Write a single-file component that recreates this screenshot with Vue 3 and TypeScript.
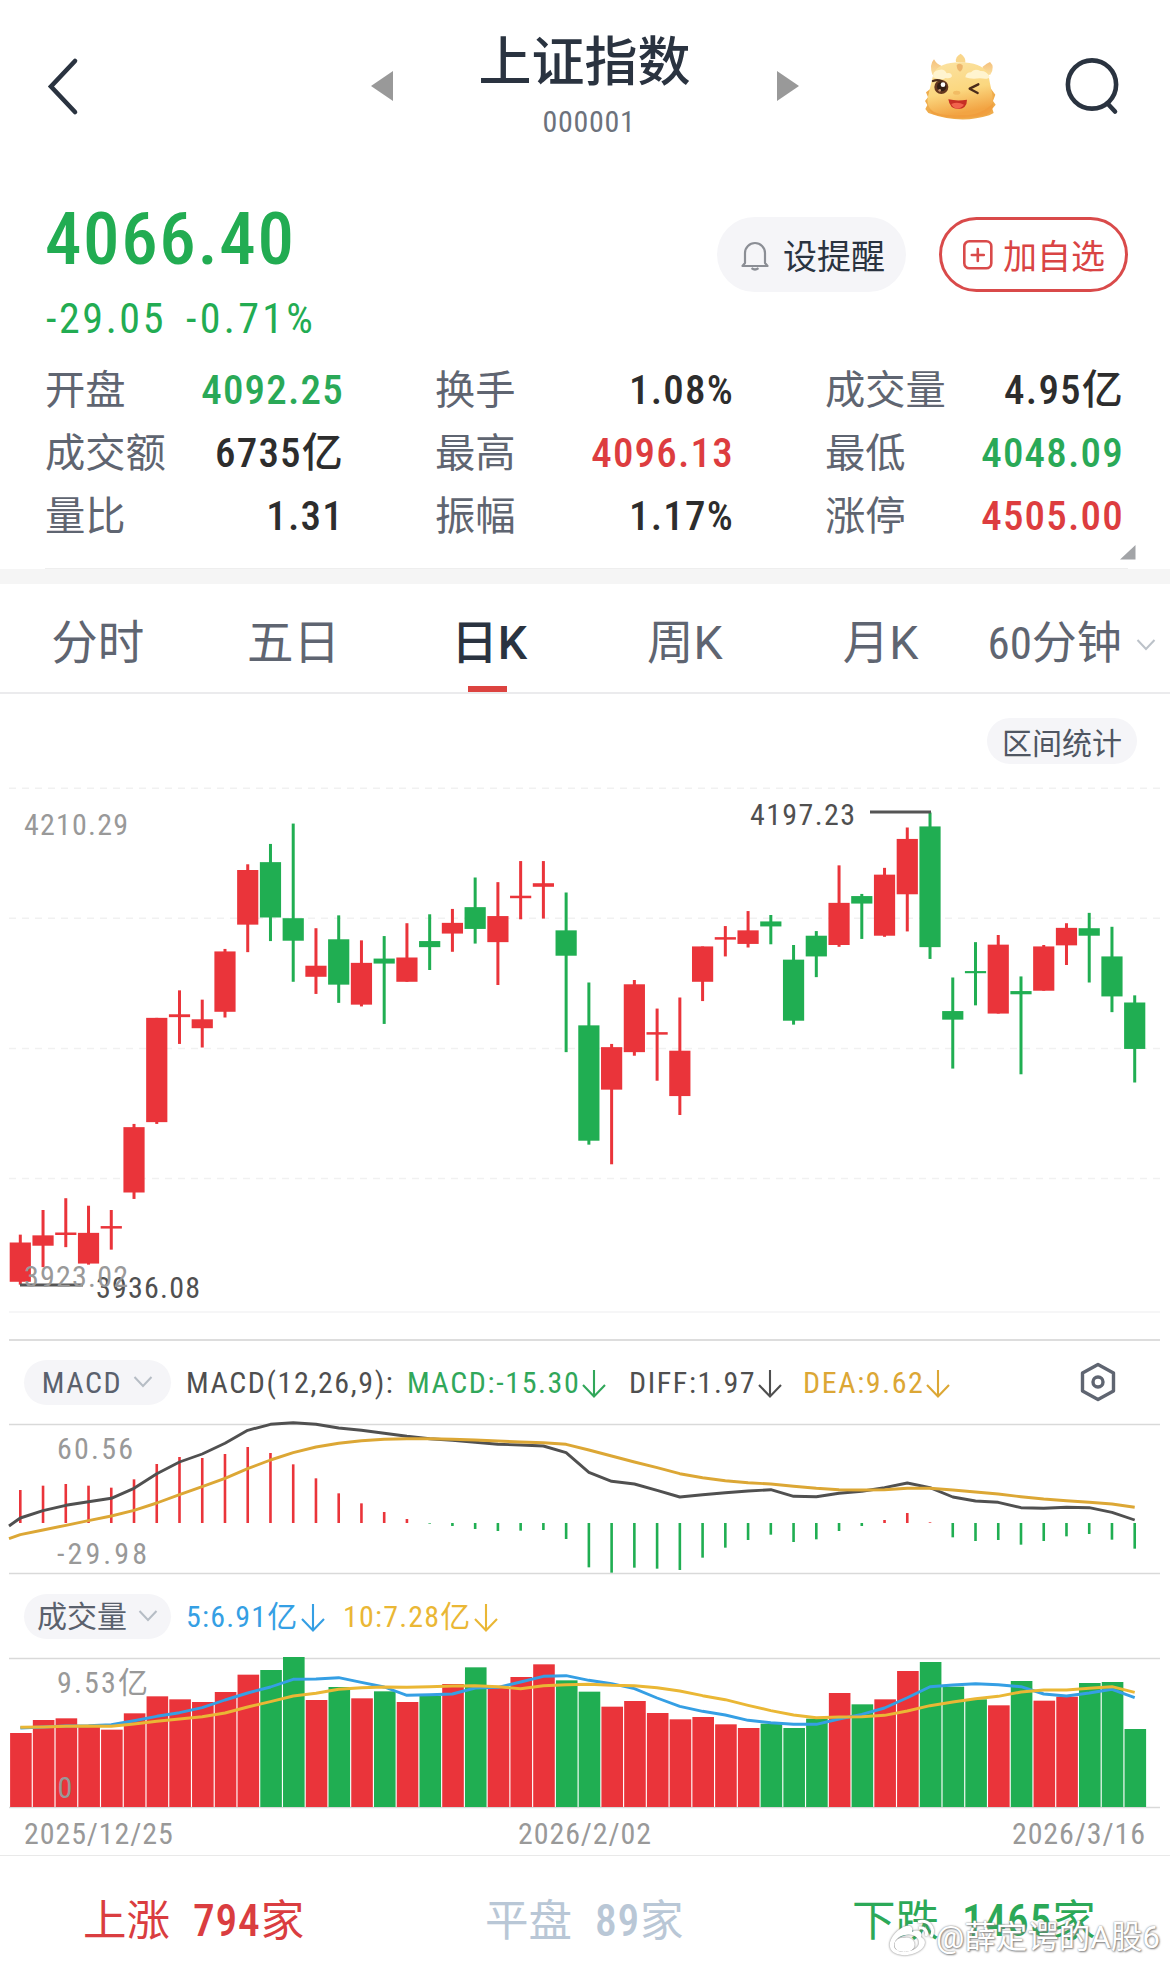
<script setup lang="ts">
type Tone = 'up' | 'down'
interface Stat { label: string; value: string; tone?: Tone }
interface Caption { x: number; y: number; w: number; text: string; cls: string }

const stats: Stat[] = [
  { label: '开盘', value: '4092.25', tone: 'down' },
  { label: '换手', value: '1.08%' },
  { label: '成交量', value: '4.95亿' },
  { label: '成交额', value: '6735亿' },
  { label: '最高', value: '4096.13', tone: 'up' },
  { label: '最低', value: '4048.09', tone: 'down' },
  { label: '量比', value: '1.31' },
  { label: '振幅', value: '1.17%' },
  { label: '涨停', value: '4505.00', tone: 'up' },
]

const tabs = ['分时', '五日', '日K', '周K', '月K']

const STEP = 22.743
const cx = (i: number): number => 20.3 + STEP * i

// Daily direction, R = rising, G = falling
const days = 'RRRRRRRRRRRGGRGRGRGRGRRRGGRRRRRRRGGGRGRRGGGRGRRGGG'
const tone = (i: number): Tone => (days[i] === 'R' ? 'up' : 'down')

// high, body top, body bottom, low, measured down from the plot top
const UNIT = 2.8
const ohlc: number[][] = [
  [1301, 1323, 1433, 1441], [1232, 1303, 1332, 1392], [1199, 1295, 1302, 1336], [1220, 1296, 1382, 1385],
  [1232, 1277, 1284, 1343], [991, 1000, 1183, 1201], [694, 694, 986, 991], [617, 684, 692, 767],
  [643, 698, 723, 777], [501, 508, 677, 693], [264, 280, 433, 510], [207, 258, 413, 479],
  [150, 415, 478, 593], [443, 548, 579, 627], [407, 474, 601, 652], [477, 540, 657, 662],
  [465, 528, 542, 711], [429, 525, 593, 593], [404, 479, 496, 560], [389, 428, 458, 509],
  [301, 384, 445, 486], [314, 409, 482, 602], [255, 352, 359, 418], [255, 317, 327, 416],
  [343, 449, 520, 790], [595, 715, 1038, 1049], [767, 776, 895, 1104], [588, 600, 790, 800],
  [668, 734, 741, 870], [637, 786, 913, 966], [494, 494, 593, 647], [437, 468, 475, 522],
  [395, 449, 487, 497], [406, 424, 438, 488], [490, 531, 702, 713], [451, 464, 522, 580],
  [267, 372, 490, 495], [347, 353, 374, 473], [274, 293, 464, 467], [161, 193, 348, 452],
  [119, 158, 496, 529], [581, 675, 699, 836], [482, 563, 569, 659], [462, 489, 682, 682],
  [578, 619, 628, 852], [490, 494, 618, 618], [429, 442, 491, 546], [400, 443, 464, 595],
  [439, 522, 634, 678], [631, 651, 781, 875],
]
const candles = ohlc.map(([h, t, b, l], i) => ({ x: cx(i), h: h / UNIT, t: t / UNIT, b: b / UNIT, l: l / UNIT, tone: tone(i) }))

const macdBars = [
  510, 497, 492, 497, 503, 478, 432, 411, 414, 402, 381, 399, 433, 475, 520, 550, 576, 597, 611, 618, 627, 633, 632, 630,
  657, 742, 758, 743, 746, 750, 713, 683, 660, 644, 666, 658, 633, 618, 600, 579, 607, 652, 663, 660, 674, 663, 649, 642,
  659, 686,
]
const diff = [
  594, 572, 556, 545, 535, 505, 461, 426, 402, 370, 331, 313, 308, 313, 324, 331, 340, 349, 356, 361, 367, 373, 375, 378,
  398, 457, 484, 492, 511, 531, 524, 518, 513, 509, 529, 530, 520, 514, 503, 489, 503, 531, 543, 547, 563, 565, 562, 563,
  577, 600,
]
const dea = [
  644, 630, 616, 602, 588, 571, 549, 524, 500, 475, 446, 420, 398, 381, 370, 362, 358, 356, 356, 358, 360, 363, 366, 368,
  373, 390, 408, 426, 443, 461, 473, 482, 488, 492, 499, 505, 509, 510, 509, 505, 505, 510, 516, 522, 530, 537, 542, 547,
  552, 562,
]
const volume = [
  459, 420, 415, 440, 449, 400, 349, 358, 366, 336, 284, 270, 231, 360, 321, 355, 334, 366, 348, 312, 262, 321, 291, 253,
  301, 335, 380, 363, 399, 418, 411, 433, 444, 431, 444, 416, 339, 373, 358, 273, 246, 320, 358, 376, 303, 362, 350, 309,
  306, 447,
]
const ma5 = [
  444, 441, 438, 437, 434, 422, 409, 398, 383, 360, 339, 321, 298, 297, 293, 307, 321, 346, 344, 342, 324, 322, 306, 289,
  287, 301, 311, 326, 354, 379, 394, 405, 421, 428, 433, 433, 417, 403, 384, 353, 320, 315, 311, 314, 320, 342, 348, 339,
  328, 353,
]
const ma10 = [
  442, 441, 439, 438, 439, 432, 424, 417, 410, 399, 381, 365, 348, 340, 328, 323, 321, 322, 320, 318, 317, 320, 326, 317,
  314, 313, 316, 317, 323, 333, 347, 359, 376, 392, 405, 413, 411, 410, 406, 393, 377, 366, 356, 349, 336, 330, 330, 325,
  320, 337,
]
const MACD_TOP = 312
const VOL_TOP = 234
const points = (v: number[], top: number): string => v.map((y, i) => `${cx(i).toFixed(1)},${((y - top) / 3).toFixed(1)}`).join(' ')

const priceText: Caption[] = [
  { x: 24, y: 65, w: 104, text: '4210.29', cls: 'faint' },
  { x: 750, y: 55, w: 105, text: '4197.23', cls: 'ink' },
  { x: 96, y: 528, w: 104, text: '3936.08', cls: 'ink' },
  { x: 24, y: 517, w: 104, text: '3923.02', cls: 'faint' },
]
</script>

<template>
  <main class="page">
    <header class="top">
      <svg class="back" width="36" height="60" viewBox="0 0 36 60"><path d="M29 5 5 30.500 29 56" /></svg>
      <svg class="prev" width="22" height="30" viewBox="0 0 22 30"><path d="M0 15 22 0V30Z" /></svg>
      <div class="heading">
        <h1>上证指数</h1>
        <p>000001</p>
      </div>
      <svg class="next" width="22" height="30" viewBox="0 0 22 30"><path d="M22 15 0 0V30Z" /></svg>
      <svg class="mascot" width="76" height="70" viewBox="66 57 228 210">
        <defs>
          <linearGradient id="skin" x1="0" y1="0" x2="0.25" y2="1">
            <stop offset="0" stop-color="#fbe3a4" /><stop offset="0.6" stop-color="#fbd77f" /><stop offset="1" stop-color="#f2a443" />
          </linearGradient>
          <linearGradient id="horn" x1="0" y1="0" x2="0" y2="1">
            <stop offset="0" stop-color="#f4c07c" /><stop offset="1" stop-color="#fbe0a0" />
          </linearGradient>
        </defs>
        <path d="M92 170 78 181 84 196 75 207 82 219 76 231 85 243Q180 278 268 250L281 243 277 230 287 218 279 207 286 188 274 172Z" fill="#efac4c" />
        <path d="M168 90Q165 74 182 65Q198 76 196 92Z" fill="#f9d68b" />
        <path d="M97 128Q87 98 102 82Q111 98 124 101L122 130Z" fill="url(#horn)" />
        <path d="M271 128Q286 104 270 90Q261 94 248 104L246 130Z" fill="url(#horn)" />
        <path d="M101 123Q118 91 180 91Q242 91 265 124Q268 148 276 182Q287 236 233 250Q174 260 116 246Q78 232 83 198Q91 163 101 123Z" fill="url(#skin)" />
        <path d="M86 231Q118 254 179 250Q244 252 280 212Q281 237 259 249Q176 270 98 246Z" fill="#f09a3a" opacity=".65" />
        <path d="M170 99Q180 91 188 100Q190 113 180 119Q170 114 170 99Z" fill="#edb56c" />
        <path d="M99 136Q97 117 116 114Q133 108 140 124Q154 120 156 133Q152 141 137 138Q124 146 99 136Z" fill="#fff4cf" />
        <path d="M196 136Q198 121 213 121Q222 108 242 117Q260 116 269 134Q268 143 240 139Q210 142 196 136Z" fill="#fff4cf" />
        <circle cx="124" cy="165" r="21" fill="#65371f" /><circle cx="125" cy="164" r="14" fill="#321d13" />
        <circle cx="129" cy="158" r="7" fill="#fff" /><circle cx="119" cy="175" r="4" fill="#c89470" />
        <path d="M99 147Q111 142 125 147" class="lash" />
        <path d="M235 157 209 170 233 183" class="lash" />
        <ellipse cx="170" cy="182" rx="11" ry="6" fill="#f2bc64" />
        <path d="M145 202Q172 208 201 203Q201 230 174 231Q149 231 145 202Z" fill="#c72f24" />
        <path d="M154 216Q173 208 192 218Q184 229 171 230Q158 227 154 216Z" fill="#f1634d" />
      </svg>
      <svg class="search" width="56" height="58" viewBox="0 0 56 58"><circle cx="28" cy="27.500" r="24.1" /><path d="M43.500 46.500 51 54.500" /></svg>
    </header>

    <section class="quote">
      <div class="price">
        <strong>4066.40</strong>
        <p><span>-29.05</span><span class="pct">-0.71%</span></p>
      </div>
      <div class="actions">
        <button class="remind">
          <svg width="30" height="32" viewBox="0 0 30 32"><path d="M5 24V14a10 10 0 0 1 20 0v10l2.500 3h-25Z M11.500 29.200q3.500 2.600 7 0" /></svg>
          <span>设提醒</span>
        </button>
        <button class="add">
          <svg width="32" height="32" viewBox="0 0 32 32"><rect x="2.300" y="2.300" width="27" height="27" rx="5" /><path d="M15.800 10V22M9.800 16H21.800" /></svg>
          <span>加自选</span>
        </button>
      </div>
    </section>

    <section class="stats">
      <div v-for="s in stats" :key="s.label" class="stat">
        <span class="label">{{ s.label }}</span><span class="value" :class="s.tone">{{ s.value }}</span>
      </div>
    </section>
    <div class="more"><svg width="18" height="17" viewBox="0 0 18 17"><path d="M16.500 1V15.500H1Z" /></svg></div>
    <div class="band"></div>

    <nav class="tabs">
      <span v-for="t in tabs" :key="t" class="tab" :class="{ active: t === '日K' }">{{ t }}</span>
      <span class="tab last">60分钟<svg width="20" height="14" viewBox="0 0 20 14"><path d="m1.500 2 8.500 9 8.500-9" /></svg></span>
    </nav>

    <div class="range"><button>区间统计</button></div>

    <svg class="plot" width="1170" height="569" viewBox="0 0 1170 569">
      <path class="dash" d="M9 18.200H1160M9 148.200H1160M9 278.500H1160M9 408.600H1160" />
      <path class="soft" d="M9 542H1160" />
      <g v-for="(c, i) in candles" :key="i" :class="c.tone">
        <rect :x="c.x - 1.5" :y="c.h" width="3" :height="c.l - c.h" />
        <rect :x="c.x - 10.6" :y="c.t" width="21.2" :height="c.b - c.t" />
      </g>
      <path class="leader" d="M870 42H931M20 515H83" />
      <text v-for="t in priceText" :key="t.text" :x="t.x" :y="t.y" :textLength="t.w" :class="t.cls">{{ t.text }}</text>
    </svg>

    <section class="indicator macd">
      <span class="pill">MACD<svg width="20" height="14" viewBox="0 0 20 14"><path d="m1.500 2 8.500 9 8.500-9" /></svg></span>
      <span class="name">MACD(12,26,9):</span>
      <span class="m1">MACD:-15.30<svg width="26" height="30" viewBox="0 0 26 30"><path d="M13 1V27M2 16 13 27.500 24 16" /></svg></span>
      <span class="m2">DIFF:1.97<svg width="26" height="30" viewBox="0 0 26 30"><path d="M13 1V27M2 16 13 27.500 24 16" /></svg></span>
      <span class="m3">DEA:9.62<svg width="26" height="30" viewBox="0 0 26 30"><path d="M13 1V27M2 16 13 27.500 24 16" /></svg></span>
      <svg class="gear" width="38" height="40" viewBox="0 0 38 40"><path d="M19 2.500 34.500 11V29L19 37.500 3.500 29V11Z" /><circle cx="19" cy="20" r="5" /></svg>
    </section>
    <svg class="plot" width="1170" height="151" viewBox="0 0 1170 151">
      <path class="rule" d="M9 .5H1160M9 149.500H1160" />
      <text x="57" y="35" textLength="76" class="faint">60.56</text>
      <text x="57" y="140" textLength="90" class="faint">-29.98</text>
      <rect v-for="(v, i) in macdBars" :key="i" :x="cx(i) - 1.3" :y="Math.min(v, 609) / 3 - MACD_TOP / 3" width="2.6" :height="Math.abs(v - 609) / 3" :class="v < 609 ? 'up' : 'down'" />
      <polyline class="line diff" :points="'9,102 ' + points(diff, MACD_TOP)" />
      <polyline class="line dea" :points="'9,114.700 ' + points(dea, MACD_TOP)" />
    </svg>

    <section class="indicator vol">
      <span class="pill">成交量<svg width="20" height="14" viewBox="0 0 20 14"><path d="m1.500 2 8.500 9 8.500-9" /></svg></span>
      <span class="v1">5:6.91亿<svg width="26" height="30" viewBox="0 0 26 30"><path d="M13 1V27M2 16 13 27.500 24 16" /></svg></span>
      <span class="v2">10:7.28亿<svg width="26" height="30" viewBox="0 0 26 30"><path d="M13 1V27M2 16 13 27.500 24 16" /></svg></span>
    </section>
    <svg class="plot" width="1170" height="151" viewBox="0 0 1170 151">
      <path class="rule" d="M9 .5H1160M9 149.500H1160" />
      <rect v-for="(v, i) in volume" :key="i" :x="10.1 + STEP * i" :y="(v - VOL_TOP) / 3" width="21.6" :height="(681 - v) / 3" :class="tone(i)" />
      <polyline class="line ma5" :points="points(ma5, VOL_TOP)" />
      <polyline class="line ma10" :points="points(ma10, VOL_TOP)" />
      <text x="57" y="34.700" textLength="91" class="faint">9.53亿</text>
      <text x="57.500" y="139.500" class="faint">0</text>
    </svg>
    <div class="dates"><span>2025/12/25</span><span>2026/2/02</span><span>2026/3/16</span></div>

    <footer class="breadth">
      <span class="rise">上涨<b>794</b>家</span>
      <span class="flat">平盘<b>89</b>家</span>
      <span class="fall">下跌<b>1465</b>家</span>
      <div class="mark">
        <svg width="48" height="40" viewBox="0 0 48 40">
          <path fill-rule="evenodd" d="M18 8C10 10 0 21 2 29C4 40 29 40 36 28C39 22 34 20 33 19C35 13 29 11 24 14C25 9 23 7 18 8ZM17 17C25 15 31 19 31 25C30 35 7 37 6 28C6 22 11 18 17 17ZM16 20A8 7 0 1 0 17 33.500A8 7 0 1 0 16 20Z" />
          <circle cx="14" cy="28" r="2.500" class="pupil" />
          <path class="wave" d="M30 4C40 1 48 10 43 19M31 10C36 9 40 13 38 18" />
        </svg>
        <span>@薛定谔的A股6</span>
      </div>
    </footer>
  </main>
</template>

<style>
body { background: #fff; }
</style>

<style scoped>
.page { width: 1170px; height: 1965px; overflow: hidden; background: #fff; font-family: "Roboto Condensed", Roboto, "Noto Sans CJK SC", sans-serif; font-stretch: 75%; color: #2a3340; }
h1, p { margin: 0; }
svg { display: block; flex: none; fill: none; overflow: visible; }
button { border: 0; margin: 0; padding: 0; box-sizing: border-box; font: inherit; color: inherit; display: flex; align-items: center; }

.top { height: 172px; display: flex; align-items: center; }
.back { margin-left: 46px; stroke: #2a3340; stroke-width: 4.6; stroke-linecap: round; }
.prev { margin-left: 289px; fill: #999; }
.next { fill: #999; }
.heading { width: 384px; text-align: center; }
h1 { font-size: 53px; line-height: 62px; font-weight: 500; margin-left: -1px; }
.heading p { margin-top: 8px; font-size: 30px; line-height: 39px; letter-spacing: .7px; color: #6d727c; padding-left: 8px; }
.mascot { margin-left: 123px; }
.search { margin-left: 66px; stroke: #2a3340; stroke-width: 4.6; stroke-linecap: round; }
.lash { stroke: #4b2b1b; stroke-width: 7; stroke-linecap: round; stroke-linejoin: round; }

.quote { height: 187px; display: flex; justify-content: space-between; padding: 0 42px 0 45px; }
.price { color: #22ac52; }
.price strong { display: block; margin-top: 21px; font-size: 73px; line-height: 92px; font-weight: 500; letter-spacing: 1.6px; }
.price p { margin-top: 0; font-size: 42px; line-height: 68px; display: flex; letter-spacing: 2.600px; padding-left: 1px; }
.pct { margin-left: 20px; letter-spacing: 3.300px; }
.actions { display: flex; gap: 33px; padding-top: 45px; }
.actions button { height: 75px; width: 189px; border-radius: 38px; font-size: 34px; line-height: 44px; }
.actions button span { padding-top: 4px; }
.remind { background: #f5f5f8; padding-left: 23px; gap: 13px; }
.remind svg { stroke: #8b8e95; stroke-width: 2.2; stroke-linejoin: round; }
.actions .add { background: #fff; border: 3px solid #d94a4a; color: #d94444; padding-left: 20px; gap: 9px; }
.add svg { stroke: #d94a4a; stroke-width: 2.6; stroke-linecap: round; }

.stats { display: grid; grid-template-columns: 299px 299px 299px; column-gap: 91px; grid-auto-rows: 63.200px; padding-left: 45px; height: 185px; }
.stat { display: flex; justify-content: space-between; line-height: 64px; }
.label { font-size: 40.300px; color: #5f6571; }
.value { font-size: 41px; font-weight: 500; letter-spacing: 1.2px; line-height: 63px; color: #2d2d2d; }
.value.up { color: #dd3d3f; }
.value.down { color: #2aa957; }
.more { height: 24px; margin-left: 45px; width: 1083px; border-bottom: 1px solid #eee; }
.more svg { margin-left: 1074px; fill: #a2a4a7; }
.band { height: 15px; background: #f5f5f5; }

.tabs { height: 108px; display: flex; border-bottom: 2px solid #ebebed; font-family: Roboto, "Noto Sans CJK SC", sans-serif; font-stretch: 100%; font-size: 46.500px; line-height: 119px; color: #5f6571; }
.tab { flex: none; width: 195.700px; height: 108px; text-align: center; position: relative; }
.tab.active { color: #2a3340; font-weight: 500; }
.tab.active::after { content: ""; position: absolute; left: 77px; bottom: 0; width: 39px; height: 6px; background: #dc4340; }
.last { display: flex; align-items: flex-start; justify-content: flex-start; box-sizing: border-box; padding-left: 9px; font-family: "Roboto Condensed", "Noto Sans CJK SC", sans-serif; font-stretch: 75%; font-size: 45px; }
.last svg { margin: 54px 0 0 14px; stroke: #bcc2c9; stroke-width: 2; }

.range { height: 76px; display: flex; justify-content: flex-end; padding: 24px 33px 0 0; box-sizing: border-box; }
.range button { width: 150px; height: 46px; border-radius: 23px; background: #f5f5f8; justify-content: center; font-size: 30px; color: #4f5662; }

.plot .up { fill: #ea343a; }
.plot .down { fill: #20ae52; }
.plot text { font-size: 30px; }
.faint { fill: #999; }
.ink { fill: #505050; }
.dash { stroke: #f1f1f1; stroke-width: 1.5; stroke-dasharray: 7 6; }
.soft { stroke: #f6f6f7; stroke-width: 2; }
.leader { stroke: #555; stroke-width: 3; }
.rule { stroke: #d9d9d9; stroke-width: 1.300; }
.line { stroke-width: 2.9; stroke-linejoin: round; }
.diff { stroke: #505050; }
.dea { stroke: #dca735; }
.ma5 { stroke: #359fe4; }
.ma10 { stroke: #eab735; }

.indicator { display: flex; align-items: center; font-size: 30px; letter-spacing: 1.600px; box-sizing: border-box; padding-left: 24px; }
.indicator span { display: flex; align-items: center; white-space: nowrap; }
.macd { height: 85px; margin: 0 10px 0 9px; padding-left: 15px; border-top: 2px solid #ddd; }
.vol { height: 83px; line-height: 43px; }
.indicator .pill { width: 147px; height: 45px; border-radius: 23px; background: #f5f5f8; color: #5a616d; justify-content: center; gap: 11px; }
.vol .pill { letter-spacing: 0; }
.pill svg { stroke: #b6bdc5; stroke-width: 2; margin-top: -2px; }
.name, .m2 { color: #4f4f4f; }
.name { margin-left: 15px; width: 221px; }
.m1 { color: #31a75a; width: 222px; }
.m2 { width: 174px; }
.m3 { color: #dca735; width: 276px; }
.indicator span:not(.pill) > svg { margin: 3px 0 0 1px; stroke: currentColor; stroke-width: 2.1; }
.gear { stroke: #5f6571; stroke-width: 3.4; stroke-linejoin: round; margin-top: -2px; }
.v1 { color: #359fe4; margin-left: 15px; width: 157px; letter-spacing: 1.200px; }
.v2 { color: #eab735; letter-spacing: 1.200px; }

.dates { height: 46px; border-bottom: 1px solid #e9e9e9; display: flex; padding: 0 24px; font-size: 30px; letter-spacing: .9px; line-height: 50px; color: #999; }
.dates span:first-child { width: 494px; }
.dates span:last-child { margin-left: auto; }

.breadth { height: 109px; position: relative; font-size: 43.500px; line-height: 132px; display: flex; }
.breadth > span { white-space: nowrap; }
.breadth b { font-weight: 500; margin-left: 23px; letter-spacing: .8px; }
.rise { color: #da3d40; margin-left: 83px; width: 402px; }
.flat { color: #b9c7d6; width: 367px; }
.fall { color: #2ca958; }
.mark { position: absolute; left: 888px; top: 57px; display: flex; align-items: center; color: #fff; font-family: Roboto, "Noto Sans CJK SC", sans-serif; font-stretch: 100%; font-size: 31.500px; line-height: 50px; white-space: nowrap; text-shadow: 0 0 2px #777, 1px 1px 2px #888; }
.mark svg { fill: #fff; filter: drop-shadow(0 0 1px #777); }
.wave { stroke: #fff; stroke-width: 3; fill: none; }
</style>
